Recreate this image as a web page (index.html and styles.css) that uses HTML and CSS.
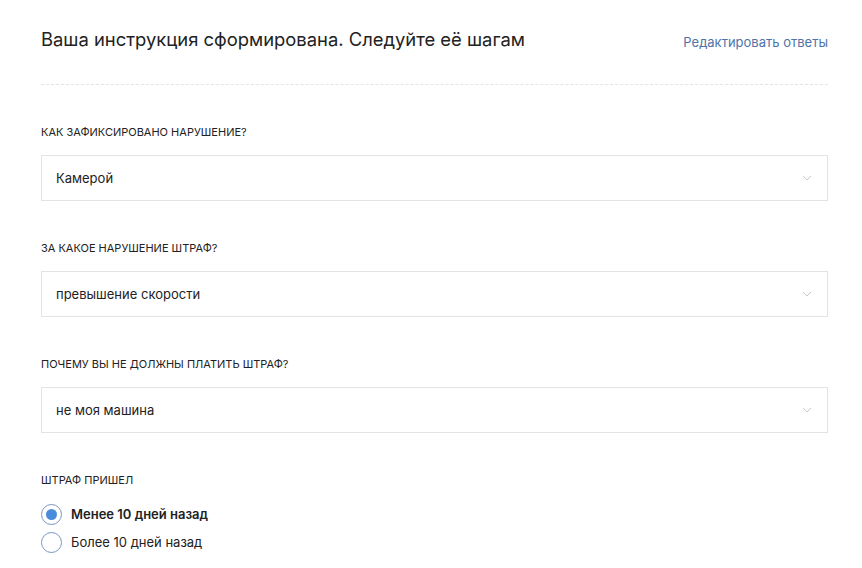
FILE: index.html
```html
<!DOCTYPE html>
<html lang="ru">
<head>
<meta charset="utf-8">
<link rel="stylesheet" href="styles.css">
</head>
<body>
<div class="page">
  <div class="header">
    <h1 class="title">Ваша инструкция сформирована. Следуйте её шагам</h1>
    <a class="edit-link" href="#">Редактировать ответы</a>
  </div>

  <div class="field">
    <div class="label">Как зафиксировано нарушение?</div>
    <div class="select"><span>Камерой</span>
      <svg class="chev" width="10" height="6" viewBox="0 0 10 6"><path d="M1 1l4 4 4-4" fill="none" stroke="#c8c8c8" stroke-width="1"/></svg>
    </div>
  </div>

  <div class="field">
    <div class="label">За какое нарушение штраф?</div>
    <div class="select"><span>превышение скорости</span>
      <svg class="chev" width="10" height="6" viewBox="0 0 10 6"><path d="M1 1l4 4 4-4" fill="none" stroke="#c8c8c8" stroke-width="1"/></svg>
    </div>
  </div>

  <div class="field">
    <div class="label">Почему вы не должны платить штраф?</div>
    <div class="select"><span>не моя машина</span>
      <svg class="chev" width="10" height="6" viewBox="0 0 10 6"><path d="M1 1l4 4 4-4" fill="none" stroke="#c8c8c8" stroke-width="1"/></svg>
    </div>
  </div>

  <div class="field radios">
    <div class="label">Штраф пришел</div>
    <div class="radio checked"><span class="circle"></span><span class="rtext">Менее 10 дней назад</span></div>
    <div class="radio"><span class="circle"></span><span class="rtext">Более 10 дней назад</span></div>
  </div>
</div>
</body>
</html>
```

FILE: styles.css
```css
* { box-sizing: border-box; }
body {
  margin: 0;
  background: #fff;
  font-family: "Inter", "Noto Sans", sans-serif;
  color: #222;
}
.page {
  width: 787px;
  margin-left: 41px;
  padding-top: 26px;
}
.header {
  display: flex;
  justify-content: space-between;
  align-items: flex-start;
  border-bottom: 1px dashed #e4e4e4;
  height: 59px;
}
.title {
  margin: 0;
  font-size: 18.4px;
  font-weight: 400;
  line-height: 26px;
  color: #222;
}
.edit-link {
  font-size: 13px;
  color: #4f73a8;
  text-decoration: none;
  line-height: 16px;
  margin-top: 8px;
}
.field { margin-top: 40px; }
.field + .field { margin-top: 40px; }
.field.radios { margin-top: 40px; }
.label {
  text-transform: uppercase;
  font-size: 11px;
  line-height: 14px;
  color: #222;
  margin-bottom: 16px;
}
.select {
  height: 46px;
  border: 1px solid #e3e3e3;
  display: flex;
  align-items: center;
  justify-content: space-between;
  padding: 0 15px 0 14px;
  font-size: 13px;
  color: #222;
}
.radios .label { margin-bottom: 13px; }
.radio {
  display: flex;
  align-items: center;
  height: 28px;
  font-size: 13px;
}
.circle {
  width: 21px;
  height: 21px;
  border-radius: 50%;
  border: 1px solid #7a96c0;
  position: relative;
  margin-right: 9px;
  flex: none;
}
.radio.checked .circle::after {
  content: "";
  position: absolute;
  left: 4px; top: 4px;
  width: 11px; height: 11px;
  border-radius: 50%;
  background: #4a8bdb;
}
.radio.checked .rtext { font-weight: 600; }
```
